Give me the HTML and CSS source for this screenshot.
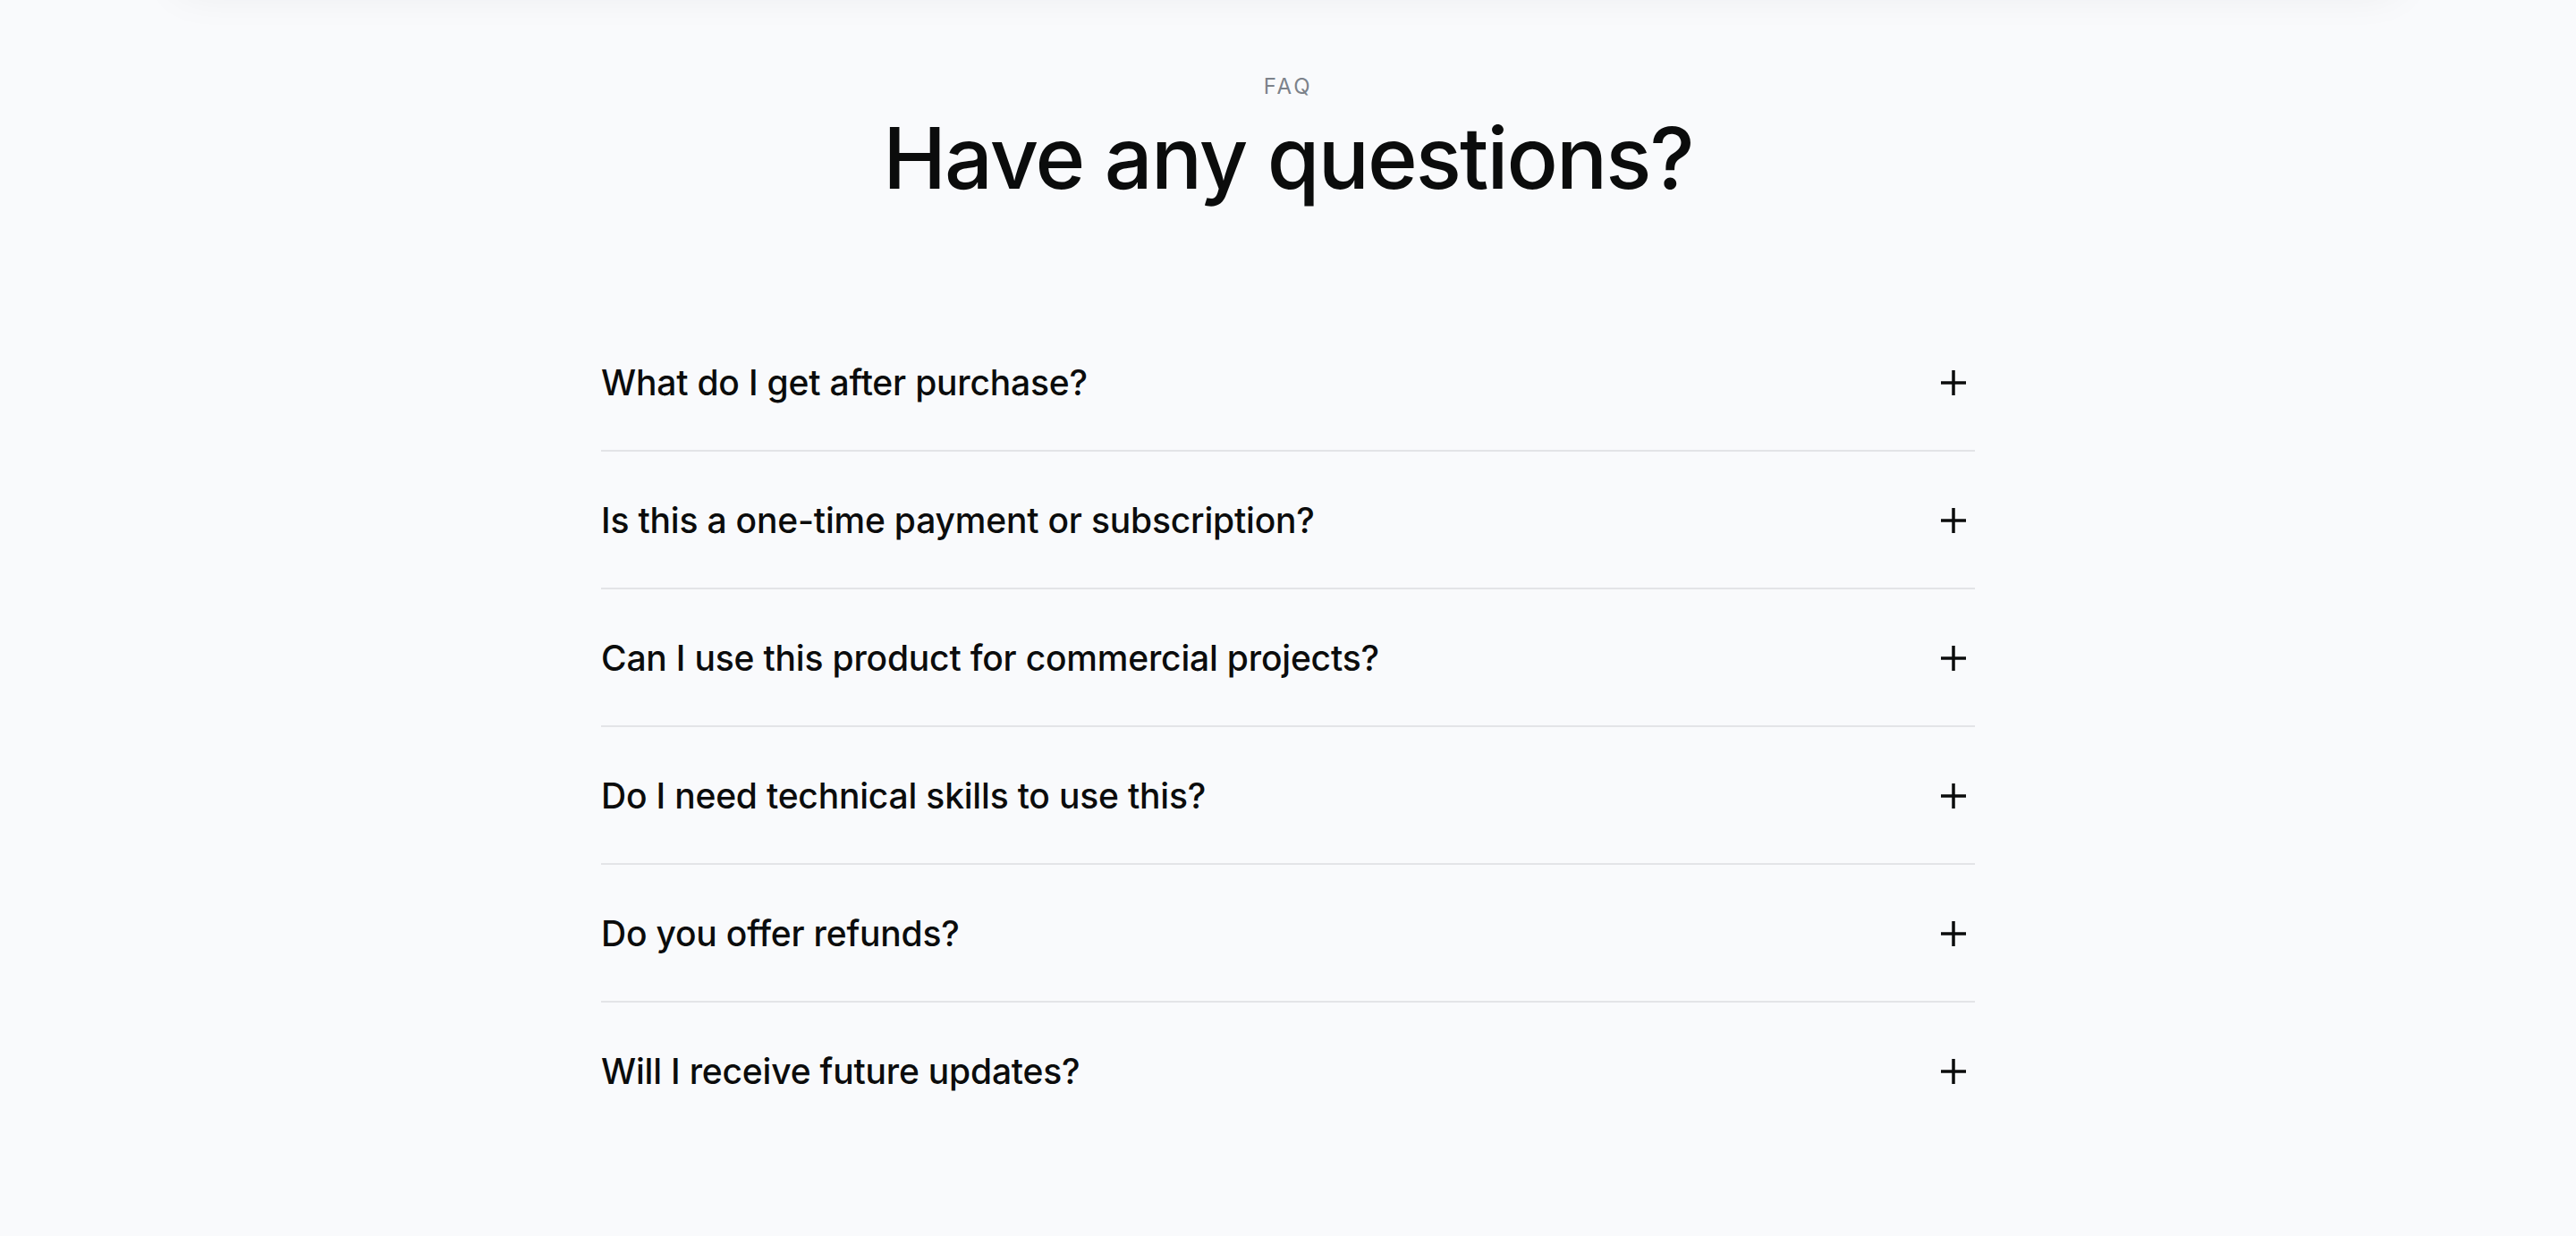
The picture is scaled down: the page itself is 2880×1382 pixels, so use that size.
FILE: index.html
```html
<!DOCTYPE html>
<html lang="en">
  <head>
    <meta charset="UTF-8" />
    <title>FAQ</title>
    <meta name="viewport" content="width=device-width, initial-scale=1.0" />
    <link rel="stylesheet" href="styles.css">
  </head>
  <body>
    <!-- bottom edge of the pricing card from the section above -->
    <div class="card-above"></div>

    <section class="faq">
      <p class="eyebrow">FAQ</p>
      <h1>Have any questions?</h1>

      <div class="faq-list">
        <div class="faq-item">
          <span class="question">What do I get after purchase?</span>
          <svg class="plus" viewBox="0 0 32 32"><path d="M16 2v28M2 16h28" /></svg>
        </div>
        <div class="faq-item">
          <span class="question">Is this a one-time payment or subscription?</span>
          <svg class="plus" viewBox="0 0 32 32"><path d="M16 2v28M2 16h28" /></svg>
        </div>
        <div class="faq-item">
          <span class="question">Can I use this product for commercial projects?</span>
          <svg class="plus" viewBox="0 0 32 32"><path d="M16 2v28M2 16h28" /></svg>
        </div>
        <div class="faq-item">
          <span class="question">Do I need technical skills to use this?</span>
          <svg class="plus" viewBox="0 0 32 32"><path d="M16 2v28M2 16h28" /></svg>
        </div>
        <div class="faq-item">
          <span class="question">Do you offer refunds?</span>
          <svg class="plus" viewBox="0 0 32 32"><path d="M16 2v28M2 16h28" /></svg>
        </div>
        <div class="faq-item">
          <span class="question">Will I receive future updates?</span>
          <svg class="plus" viewBox="0 0 32 32"><path d="M16 2v28M2 16h28" /></svg>
        </div>
      </div>
    </section>
  </body>
</html>
```

FILE: styles.css
```css
html,
body {
  height: 100%;
}

body {
  margin: 0;
  font-family: Inter, "Noto Sans", sans-serif;
  background: #f9fafc;
  color: #0b0c0c;
  overflow: hidden;
}

.card-above {
  width: 2480px;
  height: 120px;
  margin: -130px auto 0;
  background: #f9fafc;
  box-shadow: 0 0 50px rgba(20, 24, 40, 0.07);
}

.faq {
  padding-top: 95px;
  text-align: center;
}

.eyebrow {
  margin: 0;
  font-size: 24px;
  line-height: 1;
  letter-spacing: 0.12em;
  color: #7c828a;
}

h1 {
  margin: 20px 0 0;
  font-size: 95px;
  line-height: 1;
  font-weight: 500;
  letter-spacing: -0.02em;
}

.faq-list {
  width: 1536px;
  margin: 127px auto 0;
  text-align: left;
}

.faq-item {
  display: flex;
  align-items: center;
  justify-content: space-between;
  padding: 57px 8px 56px 0;
  border-bottom: 2px solid #e3e4e7;
}

.faq-item:last-child {
  border-bottom: none;
}

.question {
  font-size: 39px;
  line-height: 39px;
  font-weight: 500;
  letter-spacing: -0.005em;
}

.plus {
  width: 32px;
  height: 32px;
  fill: none;
  stroke: #0b0c0c;
  stroke-width: 3.5;
}
```
